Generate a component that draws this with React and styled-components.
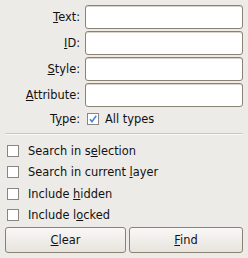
import React from "react";
import styled, { createGlobalStyle } from "styled-components";

const Global = createGlobalStyle`
  html, body { margin: 0; padding: 0; background: #edebe7; }
  body { font-family: "DejaVu Sans", Verdana, sans-serif; font-size: 11.4px; color: #111; }
  * { box-sizing: border-box; }
`;

const Panel = styled.div`
  width: 248px;
  height: 258px;
  padding: 5px;
  background: #edebe7;
  display: flex;
  flex-direction: column;
`;

const Form = styled.div`
  display: grid;
  grid-template-columns: 75px 1fr;
  column-gap: 5px;
  row-gap: 2px;
  grid-auto-rows: ${(p) => p.$row || 24}px;
  margin-top: ${(p) => p.$top || 0}px;
`;

const Label = styled.label`
  display: flex;
  align-items: center;
  justify-content: flex-end;
  white-space: nowrap;
`;

const Mn = styled.span`
  text-decoration: underline;
  text-underline-offset: 1px;
`;

const Input = styled.div`
  height: 24px;
  background: #fff;
  border: 1px solid #8b8273;
  border-radius: 3px;
  box-shadow: inset 0 1px 0 #d8d4cc;
`;

const TypeRow = styled.div`
  display: flex;
  align-items: center;
  gap: 6px;
  padding-left: 2px;
  height: 20px;
`;

const Separator = styled.div`
  margin-top: 4px;
  height: 2px;
  border-top: 1px solid #cbc7bf;
  border-bottom: 1px solid #fbfaf8;
`;

const Checks = styled.div`
  margin-top: 5px;
  display: flex;
  flex-direction: column;
`;

const CheckRow = styled.div`
  display: flex;
  align-items: center;
  gap: 9px;
  height: 21.5px;
  padding-left: 2px;
  white-space: nowrap;
`;

const Box = styled.span`
  width: 12px;
  height: 12px;
  flex: none;
  border: 1px solid #8a8782;
  background: #fff;
  display: inline-flex;
  align-items: center;
  justify-content: center;
`;

const Buttons = styled.div`
  margin-top: auto;
  display: grid;
  grid-template-columns: 121px 1fr;
  column-gap: 3px;
`;

const Button = styled.div`
  height: 26px;
  border: 1px solid #8b8273;
  border-radius: 3px;
  background: linear-gradient(#f9f8f6, #e7e3dd);
  display: flex;
  align-items: center;
  justify-content: center;
`;

function Check({ checked }) {
  return (
    <Box>
      {checked && (
        <svg width="10" height="10" viewBox="0 0 10 10">
          <path d="M2 5.2 L4 7.6 L8.2 1.8" fill="none" stroke="#4a86d4" strokeWidth="1.6" />
        </svg>
      )}
    </Box>
  );
}

export default function App() {
  return (
    <>
      <Global />
      <Panel>
        <Form>
          <Label><span><Mn>T</Mn>ext:</span></Label>
          <Input />
          <Label><span><Mn>I</Mn>D:</span></Label>
          <Input />
          <Label><span><Mn>S</Mn>tyle:</span></Label>
          <Input />
          <Label><span><Mn>A</Mn>ttribute:</span></Label>
          <Input />
        </Form>
        <Form $row={20} $top={2}>
          <Label><span>T<Mn>y</Mn>pe:</span></Label>
          <TypeRow>
            <Check checked />
            <span>All types</span>
          </TypeRow>
        </Form>
        <Separator />
        <Checks>
          <CheckRow><Check /><span>Search in s<Mn>e</Mn>lection</span></CheckRow>
          <CheckRow><Check /><span>Search in current <Mn>l</Mn>ayer</span></CheckRow>
          <CheckRow><Check /><span>Include <Mn>h</Mn>idden</span></CheckRow>
          <CheckRow><Check /><span>Include l<Mn>o</Mn>cked</span></CheckRow>
        </Checks>
        <Buttons>
          <Button><span><Mn>C</Mn>lear</span></Button>
          <Button><span><Mn>F</Mn>ind</span></Button>
        </Buttons>
      </Panel>
    </>
  );
}
